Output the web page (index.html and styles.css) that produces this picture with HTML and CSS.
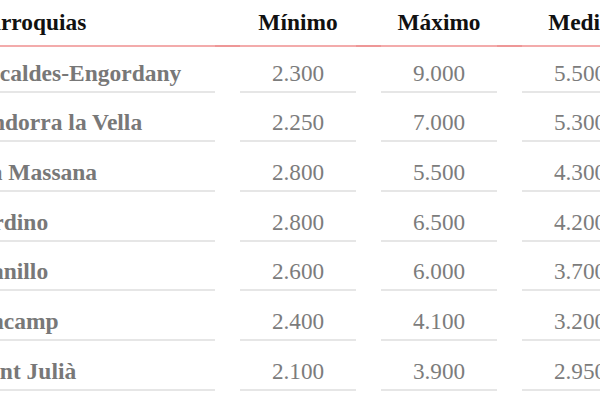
FILE: index.html
```html
<!DOCTYPE html>
<html lang="es">
<head>
<meta charset="utf-8">
<title>Parroquias</title>
<link rel="stylesheet" href="styles.css">
</head>
<body>
<div class="page">
  <div class="table">
    <div class="thead">
      <div class="th th-name">Parroquias</div>
      <div class="th">Mínimo</div>
      <div class="th">Máximo</div>
      <div class="th">Media</div>
    </div>
    <div class="tbody">
      <div class="td td-name">Escaldes-Engordany</div><div class="td">2.300</div><div class="td">9.000</div><div class="td">5.500</div>
      <div class="td td-name">Andorra la Vella</div><div class="td">2.250</div><div class="td">7.000</div><div class="td">5.300</div>
      <div class="td td-name">La Massana</div><div class="td">2.800</div><div class="td">5.500</div><div class="td">4.300</div>
      <div class="td td-name">Ordino</div><div class="td">2.800</div><div class="td">6.500</div><div class="td">4.200</div>
      <div class="td td-name">Canillo</div><div class="td">2.600</div><div class="td">6.000</div><div class="td">3.700</div>
      <div class="td td-name">Encamp</div><div class="td">2.400</div><div class="td">4.100</div><div class="td">3.200</div>
      <div class="td td-name">Sant Julià</div><div class="td">2.100</div><div class="td">3.900</div><div class="td">2.950</div>
    </div>
  </div>
</div>
</body>
</html>
```
FILE: styles.css
```css
html, body {
  margin: 0;
  padding: 0;
  background: #ffffff;
  overflow: hidden;
}

.page {
  width: 600px;
  height: 400px;
  overflow: hidden;
  font-family: "Liberation Serif", "Times New Roman", serif;
}

.table {
  margin-left: -25px;
  width: 663px;
}

.thead,
.tbody {
  display: grid;
  grid-template-columns: 240px 116px 116px 116px;
  column-gap: 25px;
}

.thead {
  padding-top: 9.3px;
  border-bottom: 2px solid #ee9797;
}

.th {
  font-size: 23.4px;
  font-weight: bold;
  color: #111111;
  line-height: 26px;
  text-align: center;
  padding-bottom: 9.4px;
  border-bottom: 2px solid #f3abab;
  margin-bottom: -2px;
  white-space: nowrap;
}

.th-name {
  text-align: left;
}

.tbody {
  margin-top: -3.7px;
}

.td {
  font-size: 23.2px;
  color: #7c7c7c;
  line-height: 26px;
  text-align: center;
  padding-top: 16.67px;
  padding-bottom: 5px;
  border-bottom: 2px solid #e6e6e6;
  white-space: nowrap;
}

.td-name {
  text-align: left;
  font-weight: bold;
  font-size: 23.5px;
  color: #787878;
}
```
